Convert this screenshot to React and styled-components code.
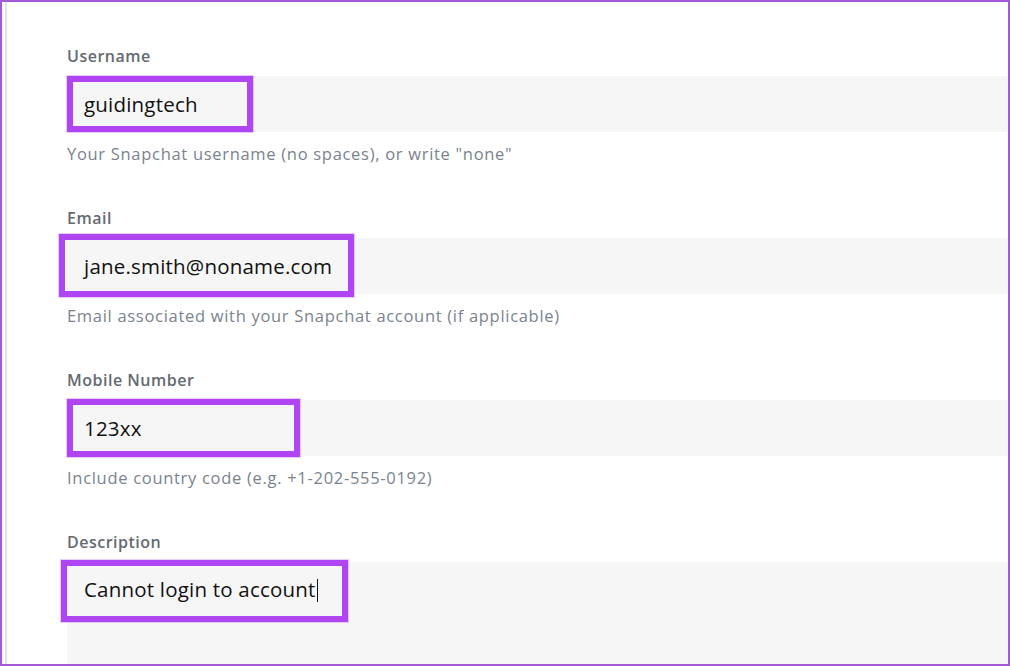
import React from 'react'
import styled, { createGlobalStyle } from 'styled-components'

const GlobalStyle = createGlobalStyle`
  html, body {
    margin: 0;
    padding: 0;
    background: #ffffff;
  }
  * {
    box-sizing: border-box;
  }
`

const Frame = styled.div`
  width: 1010px;
  height: 666px;
  border: 2px solid #a45ad6;
  overflow: hidden;
  background: #ffffff;
  display: flex;
`

const Sheet = styled.div`
  flex: 1;
  margin-left: 3px;
  border-left: 2px solid #e4e4e4;
  padding: 44px 0 0 60px;
  display: flex;
  flex-direction: column;
  font-family: 'Open Sans', 'Liberation Sans', sans-serif;
`

const Section = styled.div`
  display: flex;
  flex-direction: column;
  margin-bottom: 44px;
`

const Label = styled.div`
  font-size: 16px;
  line-height: 20px;
  font-weight: 600;
  letter-spacing: 0.5px;
  color: #646a70;
  margin-bottom: 10px;
`

const Field = styled.div`
  position: relative;
  height: ${props => props.tall ? '120px' : '56px'};
  background: #f6f6f6;
  padding: ${props => props.tall ? '13px 0 0 17px' : '0 0 1px 17px'};
  display: flex;
  align-items: ${props => props.tall ? 'flex-start' : 'center'};
  font-size: 20.5px;
  line-height: 28px;
  letter-spacing: 0.2px;
  color: #111111;
`

const Value = styled.span`
  position: relative;
  z-index: 1;
`

const Caret = styled.span`
  display: inline-block;
  width: 1px;
  height: 23px;
  background: #111111;
  vertical-align: -5px;
  margin-left: 1px;
`

const Highlight = styled.div`
  position: absolute;
  left: ${props => props.left}px;
  top: ${props => props.top}px;
  width: ${props => props.width}px;
  height: ${props => props.height}px;
  border: 6px solid #b045f4;
  box-shadow: 0 0 0 1px rgba(190, 110, 245, 0.35);
  pointer-events: none;
`

const Helper = styled.div`
  margin-top: 12px;
  font-size: 16.5px;
  line-height: 20px;
  letter-spacing: 0.7px;
  color: #7a838d;
`

const fields = [
  {
    label: 'Username',
    value: 'guidingtech',
    helper: 'Your Snapchat username (no spaces), or write "none"',
    box: { left: 0, top: 0, width: 186, height: 56 }
  },
  {
    label: 'Email',
    value: 'jane.smith@noname.com',
    helper: 'Email associated with your Snapchat account (if applicable)',
    box: { left: -8, top: -4, width: 295, height: 63 }
  },
  {
    label: 'Mobile Number',
    value: '123xx',
    helper: 'Include country code (e.g. +1-202-555-0192)',
    box: { left: 0, top: -1, width: 233, height: 58 }
  }
]

const App = () => {
  return (
    <>
      <GlobalStyle />
      <Frame>
        <Sheet>
          {fields.map(f => (
            <Section key={f.label}>
              <Label>{f.label}</Label>
              <Field>
                <Value>{f.value}</Value>
                <Highlight {...f.box} />
              </Field>
              <Helper>{f.helper}</Helper>
            </Section>
          ))}
          <Section>
            <Label>Description</Label>
            <Field tall>
              <Value>
                Cannot login to account
                <Caret />
              </Value>
              <Highlight left={-6} top={-2} width={287} height={62} />
            </Field>
          </Section>
        </Sheet>
      </Frame>
    </>
  )
}

export default App
